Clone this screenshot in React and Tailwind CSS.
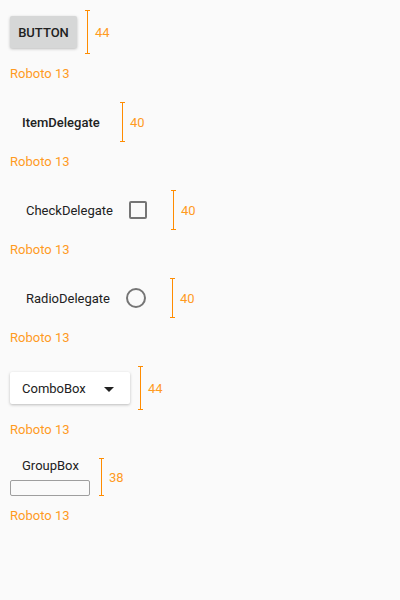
import React from "react";

function Measure({ value }) {
  return (
    <div className="flex items-center h-full ml-[8px]">
      <div className="flex flex-col items-center w-[5px] h-full">
        <div className="w-[5px] h-px bg-[#ff8c00]" />
        <div className="w-px flex-1 bg-[#ff8c00]" />
        <div className="w-[5px] h-px bg-[#ff8c00]" />
      </div>
      <span className="ml-[5px] text-[13px] leading-[15px] text-[#ff9a1f]">{value}</span>
    </div>
  );
}

function Label() {
  return (
    <div className="mt-[12px] mb-[21px] h-[15px] leading-[15px] text-[13px] text-[#ff9a1f]">
      Roboto 13
    </div>
  );
}

export default function App() {
  return (
    <div className="w-[400px] h-[600px] bg-[#fafafa] pt-[10px] pl-[10px] font-['Roboto',sans-serif] text-[13px] text-[#212121]">
      {/* Button */}
      <div className="flex items-center h-[44px]">
        <div className="w-[67px] h-[32px] flex items-center justify-center rounded-[2px] bg-[#d6d7d7] shadow-[0_1px_3px_rgba(0,0,0,0.25)] font-medium leading-[15px]">
          BUTTON
        </div>
        <Measure value="44" />
      </div>
      <Label />

      {/* ItemDelegate */}
      <div className="flex items-center h-[40px]">
        <div className="w-[102px] h-full flex items-center pl-[12px] font-medium leading-[15px]">
          ItemDelegate
        </div>
        <Measure value="40" />
      </div>
      <Label />

      {/* CheckDelegate */}
      <div className="flex items-center h-[40px]">
        <div className="w-[153px] h-full flex items-center justify-between px-[16px] leading-[15px]">
          <span>CheckDelegate</span>
          <div className="w-[18px] h-[18px] border-2 border-[#757575] rounded-[2px]" />
        </div>
        <Measure value="40" />
      </div>
      <Label />

      {/* RadioDelegate */}
      <div className="flex items-center h-[40px]">
        <div className="w-[152px] h-full flex items-center justify-between px-[16px] leading-[15px]">
          <span>RadioDelegate</span>
          <div className="w-[20px] h-[20px] border-2 border-[#757575] rounded-full" />
        </div>
        <Measure value="40" />
      </div>
      <Label />

      {/* ComboBox */}
      <div className="flex items-center h-[44px]">
        <div className="w-[120px] h-[32px] flex items-center justify-between pl-[12px] pr-[16px] bg-white rounded-[2px] shadow-[0_1px_3px_rgba(0,0,0,0.25)] leading-[15px]">
          <span>ComboBox</span>
          <svg width="10" height="5" viewBox="0 0 10 5" className="mt-[2px]">
            <path d="M0 0 L10 0 L5 5 Z" fill="#212121" />
          </svg>
        </div>
        <Measure value="44" />
      </div>
      <Label />

      {/* GroupBox */}
      <div className="flex items-center h-[38px]">
        <div className="w-[81px] h-full flex flex-col">
          <div className="h-[15px] leading-[15px] pl-[12px]">GroupBox</div>
          <div className="mt-[7px] w-[80px] h-[16px] border border-[#9e9e9e] rounded-[2px]" />
        </div>
        <Measure value="38" />
      </div>
      <Label />
    </div>
  );
}
